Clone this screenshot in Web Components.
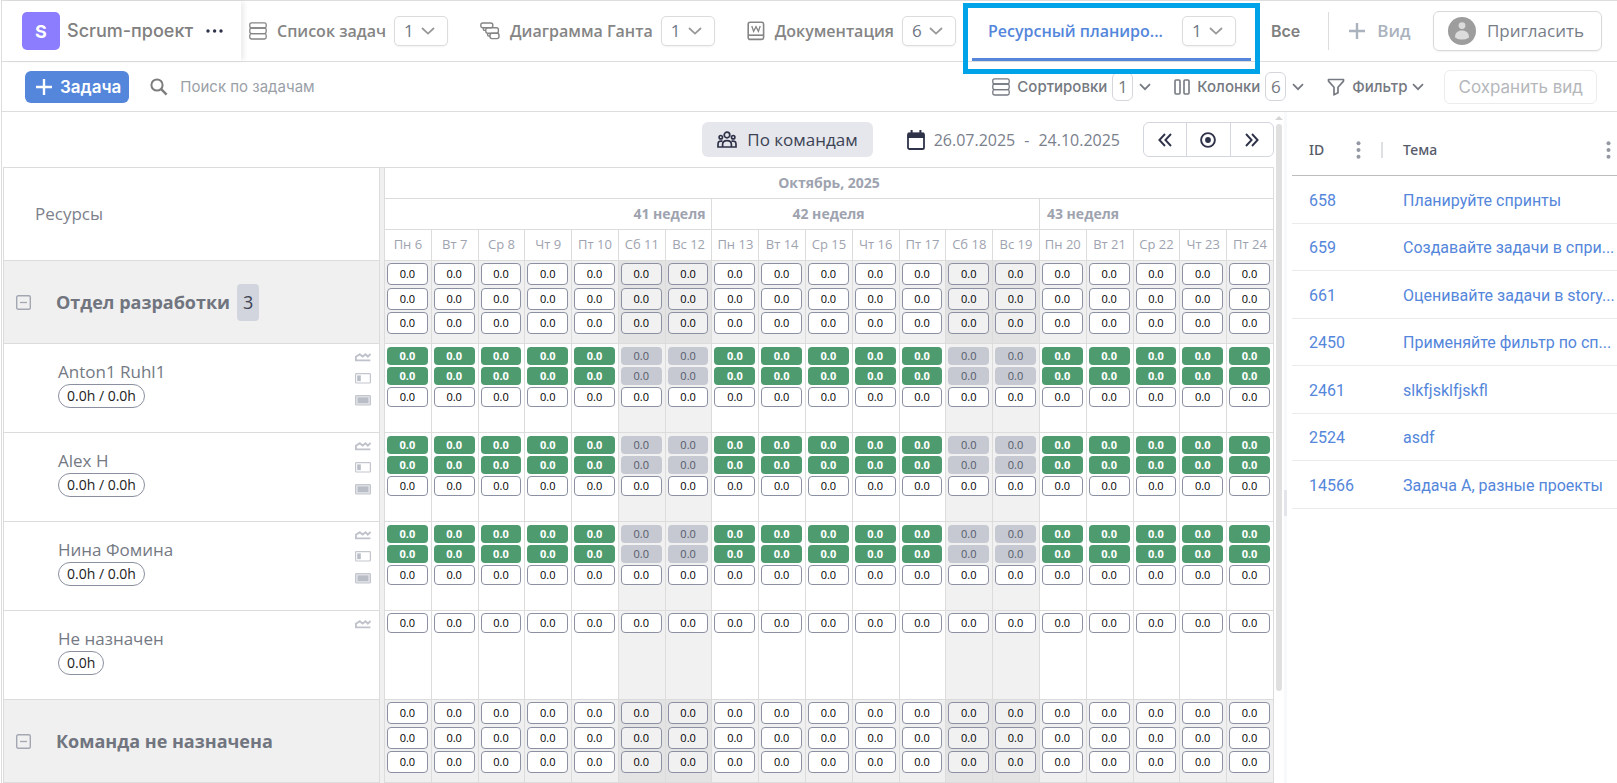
<!DOCTYPE html>
<html lang="ru">
<head>
<meta charset="utf-8">
<title>Scrum-проект</title>
<style>
html, body { height: 100%; margin: 0; }
body { background: #fff; overflow: hidden; font-family: "Open Sans", "Noto Sans", sans-serif; }
</style>
</head>
<body>
<planner-app></planner-app>
<script>
const BASE = `*, *::before, *::after { box-sizing: border-box; }
button { font: inherit; color: inherit; background: none; border: 0; padding: 0; margin: 0; cursor: pointer; }
a { color: inherit; text-decoration: none; }`;

const define = (name, html, setup) => customElements.define(name, class extends HTMLElement {
  connectedCallback() {
    if (this.shadowRoot) return;
    const t = document.createElement('template');
    t.innerHTML = typeof html === 'function' ? html(this) : html;
    this.attachShadow({ mode: 'open' }).append(t.content.cloneNode(true));
    if (setup) setup(this);
  }
});

/* [width, height, markup] */
const ICONS = {
  rows: [18, 18, '<g fill="none" stroke="currentColor" stroke-width="1.3"><rect x=".8" y=".8" width="16.4" height="5.2" rx="1.8"/><rect x=".8" y="6" width="16.4" height="5.6" rx="1.8"/><rect x=".8" y="11.6" width="16.4" height="5.4" rx="1.8"/></g>'],
  gantt: [20, 18, '<g fill="none" stroke="currentColor" stroke-width="1.4"><rect x=".8" y="1" width="12" height="4.8" rx="2"/><rect x="5.8" y="5.8" width="12.6" height="5.4" rx="2"/><rect x="10" y="11.2" width="9" height="5.4" rx="2"/><path d="M3.4 6v1.4q0 1 1 1h1.4M7.6 11.4v1.4q0 1.2 1.2 1.2H10"/></g>'],
  doc: [18, 20, '<g fill="none" stroke="currentColor" stroke-width="1.6"><rect x="1.2" y="1.2" width="15.4" height="17.2" rx="2"/><path d="M1.4 14.2h15" /><path d="M4.8 5l1.8 5.4L9 5.6l2.4 4.8L13.2 5" stroke-width="1.3"/></g>'],
  down: [14, 8, '<path d="M1 1l6 5.6L13 1" fill="none" stroke="currentColor" stroke-width="1.8"/>'],
  downs: [12, 8, '<path d="M1 1.2l5 5 5-5" fill="none" stroke="currentColor" stroke-width="1.7"/>'],
  dots: [18, 4, '<g fill="#2f3349"><circle cx="2" cy="2" r="1.7"/><circle cx="8.6" cy="2" r="1.7"/><circle cx="15" cy="2" r="1.7"/></g>'],
  vdots: [5, 18, '<g fill="#9498a3"><circle cx="2.5" cy="2.2" r="2"/><circle cx="2.5" cy="9" r="2"/><circle cx="2.5" cy="15.8" r="2"/></g>'],
  plus: [16, 16, '<path d="M8 0v16M0 8h16" stroke="currentColor" stroke-width="2.4"/>'],
  user: [28, 28, '<circle cx="14" cy="14" r="14" fill="#9d9d9d"/><circle cx="14" cy="8.6" r="3.4" fill="#dcdcdc"/><path d="M7 20.4c0-5 3-7 7-7s7 2 7 7q-3 2.2-7 2.2t-7-2.2z" fill="#dcdcdc"/>'],
  search: [18, 18, '<g fill="none" stroke="currentColor" stroke-width="2"><circle cx="7" cy="7" r="5.6"/><path d="M11.2 11.2l5.4 5.4" stroke-width="2.4"/></g>'],
  columns: [16, 16, '<g fill="none" stroke="currentColor" stroke-width="1.6"><rect x="1" y="1" width="5" height="14" rx="1"/><rect x="10" y="1" width="5" height="14" rx="1"/></g>'],
  filter: [18, 18, '<path d="M1.5 1.500h15v1.600L11 9.200v5.600l-4 2V9.200L1.500 3.100z" fill="none" stroke="currentColor" stroke-width="1.7" stroke-linejoin="round"/>'],
  team: [20, 18, '<g fill="none" stroke="#2f3349" stroke-width="1.7"><circle cx="10" cy="4" r="2.8"/><circle cx="3.8" cy="6.2" r="1.7"/><circle cx="16.2" cy="6.2" r="1.7"/><path d="M5.6 16v-2.6q0-3.8 4.400-3.8t4.400 3.8V16zM5.400 10.200q-4.400-.8-4.400 3V16h4.600M14.600 10.200q4.400-.8 4.400 3V16h-4.600"/></g>'],
  calendar: [18, 20, '<rect x="1" y="3.6" width="16" height="15.4" rx="1.6" fill="none" stroke="currentColor" stroke-width="1.8"/><path d="M.6 3.400q0-.8.8-.8h15.200q.8 0 .8.800V8H.6zM3.600 0h2v4h-2zM12.400 0h2v4h-2z" fill="currentColor"/>'],
  prev: [14, 14, '<path d="M7 1L1.400 7 7 13M13 1L7.400 7l5.600 6" fill="none" stroke="currentColor" stroke-width="1.9"/>'],
  next: [14, 14, '<path d="M1 1l5.600 6L1 13M7 1l5.600 6L7 13" fill="none" stroke="currentColor" stroke-width="1.9"/>'],
  target: [16, 16, '<circle cx="8" cy="8" r="6.9" fill="none" stroke="currentColor" stroke-width="1.9"/><circle cx="8" cy="8" r="2.9" fill="currentColor"/>'],
  minus: [15, 15, '<rect x=".7" y=".7" width="13.6" height="13.6" rx="1.5" fill="none" stroke="#a3a7b2" stroke-width="1.4"/><path d="M4 7.500h7" stroke="#a3a7b2" stroke-width="1.3"/>'],
  wave: [16, 10, '<path d="M.9 9V4.800L4.800 2.200l2.800 2.400L10.600 2.200l2.200 2.400 2.800-2.600M0 8.400h15.400" fill="none" stroke="#bfc2ca" stroke-width="1.9"/>'],
  half: [16, 11, '<rect x=".6" y=".6" width="14.8" height="9.4" rx=".8" fill="none" stroke="#c3c6cd" stroke-width="1.2"/><rect x="2.2" y="2.4" width="3.6" height="5.8" fill="#b9bdc6"/>'],
  full: [16, 11, '<rect x=".6" y=".6" width="14.8" height="9.4" rx=".8" fill="#e3e5e9" stroke="#c3c6cd" stroke-width="1.2"/><rect x="2.6" y="2.4" width="10.8" height="5.8" fill="#b9bdc6"/>']
};

define('ui-icon', el => {
  const [w, h, body] = ICONS[el.getAttribute('name')];
  return `<style>:host { display: block; flex: none; width: ${w}px; height: ${h}px; } svg { display: block; }</style>
  <svg width="${w}" height="${h}" viewBox="0 0 ${w} ${h}" aria-hidden="true">${body}</svg>`;
});

define('count-button', el => `<style>${BASE}
  :host { display: block; flex: none; }
  button { display: flex; align-items: center; justify-content: space-between; width: 54px; height: 30px; padding: 0 12px 0 9px;
    border: 1px solid #dcdcdc; border-radius: 5px; box-shadow: 0 1px 2px rgba(0,0,0,.05); color: #707786; font-size: 17px; line-height: 24px; background: #fff; }
  ui-icon { color: #999; }</style>
  <button type="button" aria-haspopup="menu"><slot></slot><ui-icon name="down"></ui-icon></button>`);

define('view-tab', el => `<style>${BASE}
  :host { display: flex; align-items: center; flex: none; height: 100%; position: relative; color: #858585; }
  :host([active]) { padding: 0 15px 0 16px; margin-left: -16px; color: #5486db; box-shadow: inset 0 -3px #5486db; }
  :host([active]) .name { min-width: 194px; }
  :host([active])::after { content: ""; position: absolute; inset: 2px -9px -13px -9px; border: 5px solid #00a2e8; pointer-events: none; z-index: 3; }
  ui-icon { margin-right: 10px; }
  .name { font-size: 16px; line-height: 24px; font-weight: 600; white-space: nowrap; margin-right: 8px; }
  :host([active]) .name { margin-right: 0; }</style>
  ${el.hasAttribute('icon') ? `<ui-icon name="${el.getAttribute('icon')}"></ui-icon>` : ''}
  <a class="name" href="#"><slot></slot></a><count-button>${el.getAttribute('count')}</count-button>`);

define('project-header', `<style>${BASE}
  :host { display: flex; align-items: center; height: 62px; border-top: 1px solid #ddd; border-bottom: 1px solid #ddd; }
  .project { display: flex; align-items: center; width: 239px; height: 100%; padding-left: 20px; flex: none; box-shadow: 4px 0 5px -1px rgba(0,0,0,.08);
    font-family: Inter, sans-serif; }
  .logo { display: grid; place-items: center; width: 38px; height: 38px; border-radius: 5px; background: #8c7dff; color: #fff; font-size: 18px; font-weight: 700; }
  .title { margin: 0 13px 0 7px; font-size: 18px; line-height: 24px; font-weight: 500; color: #808080; white-space: nowrap; }
  nav { display: flex; height: 100%; gap: 32px; padding-left: 8px; flex: none; }
  .all { margin-left: 20px; font: 600 16px/24px Inter, sans-serif; color: #808080; }
  .sep { width: 1px; height: 38px; background: #ddd; margin-left: 28px; }
  .add { display: flex; align-items: center; gap: 12px; margin-left: 20px; font-size: 17px; line-height: 24px; font-weight: 600; color: #a9b2bd; }
  .invite { display: flex; align-items: center; gap: 11px; height: 40px; margin: 0 15px 0 auto; padding: 0 17px 0 14px; border: 1px solid #d9d9d9; border-radius: 6px;
    color: #777d88; font-size: 17px; line-height: 24px; box-shadow: 0 1px 2px rgba(0,0,0,.06); }
  </style>
  <div class="project"><span class="logo">S</span><span class="title">Scrum-проект</span><button type="button" aria-label="Меню проекта"><ui-icon name="dots"></ui-icon></button></div>
  <nav>
    <view-tab icon="rows" count="1">Список задач</view-tab>
    <view-tab icon="gantt" count="1">Диаграмма Ганта</view-tab>
    <view-tab icon="doc" count="6">Документация</view-tab>
    <view-tab active count="1">Ресурсный планиро...</view-tab>
  </nav>
  <a class="all" href="#">Все</a><span class="sep"></span>
  <button class="add" type="button"><ui-icon name="plus"></ui-icon>Вид</button>
  <button class="invite" type="button"><ui-icon name="user"></ui-icon>Пригласить</button>`);

define('tool-menu', el => `<style>${BASE}
  :host { display: block; flex: none; }
  button { display: flex; align-items: center; font: 500 15px/20px Inter, sans-serif; color: #757981; white-space: nowrap; }
  .label { margin-left: 7px; margin-right: 5px; }
  .count { display: grid; place-items: center; width: 21px; height: 29px; margin-right: 6px; border: 1px solid #d4d6da; border-radius: 6px; font: 400 17px/24px "Open Sans", sans-serif; }</style>
  <button type="button" aria-haspopup="menu"><ui-icon name="${el.getAttribute('icon')}"></ui-icon><span class="label"><slot></slot></span>
  ${el.hasAttribute('count') ? `<span class="count">${el.getAttribute('count')}</span>` : ''}<ui-icon name="downs"></ui-icon></button>`);

define('view-toolbar', `<style>${BASE}
  :host { display: flex; align-items: center; height: 50px; padding: 0 20px 0 23px; border-bottom: 1px solid #ddd; font-family: Inter, sans-serif; }
  .new { display: flex; align-items: center; gap: 8px; height: 32px; padding: 0 8px 0 11px; border-radius: 6px; background: #5486db; color: #fff; font-size: 17px; line-height: 24px; font-weight: 600; }
  label { display: flex; align-items: center; gap: 12px; margin-left: 21px; flex: 1; color: #7d7d7d; }
  input { flex: 1; min-width: 0; border: 0; outline: 0; background: none; padding: 0; font: 400 15px/20px Inter, sans-serif; }
  input::placeholder { color: #9aa0a8; opacity: 1; }
  .menus { display: flex; align-items: center; gap: 23px; }
  .save { height: 34px; margin-left: 20px; padding: 0 13px; border: 1px solid #ececec; border-radius: 6px; color: #b5b7bb; font-size: 17px; line-height: 24px; }</style>
  <button class="new" type="button"><ui-icon name="plus"></ui-icon>Задача</button>
  <label aria-label="Поиск"><ui-icon name="search"></ui-icon><input type="search" placeholder="Поиск по задачам"></label>
  <div class="menus"><tool-menu icon="rows" count="1">Сортировки</tool-menu><tool-menu icon="columns" count="6">Колонки</tool-menu><tool-menu icon="filter">Фильтр</tool-menu></div>
  <button class="save" type="button" disabled>Сохранить вид</button>`);

define('planner-controls', `<style>${BASE}
  :host { display: flex; align-items: center; justify-content: flex-end; height: 55px; color: #2f3349; font-size: 17px; line-height: 24px; }
  .team { display: flex; align-items: center; gap: 10px; height: 35px; padding: 0 15px; border-radius: 6px; background: #e5e7ec; color: #3c4254; }
  .range { display: flex; align-items: center; gap: 9px; margin: 0 23px 0 34px; color: #2f3349; font-size: 16px; }
  .range span { color: #7a808c; }
  .steps { display: flex; width: 131px; height: 35px; border: 1px solid #d3d6df; border-radius: 6px; }
  .steps button { flex: 1; display: grid; place-items: center; }
  .steps button + button { border-left: 1px solid #d3d6df; }</style>
  <button class="team" type="button"><ui-icon name="team"></ui-icon>По командам</button>
  <button class="range" type="button"><ui-icon name="calendar"></ui-icon><span>26.07.2025</span><span>-</span><span>24.10.2025</span></button>
  <div class="steps"><button type="button" aria-label="Назад"><ui-icon name="prev"></ui-icon></button><button type="button" aria-label="Сегодня"><ui-icon name="target"></ui-icon></button><button type="button" aria-label="Вперёд"><ui-icon name="next"></ui-icon></button></div>`);

const ROWS = [
  { group: 'Отдел разработки', badge: '3' },
  { name: 'Anton1 Ruhl1', hours: '0.0h / 0.0h' },
  { name: 'Alex H', hours: '0.0h / 0.0h' },
  { name: 'Нина Фомина', hours: '0.0h / 0.0h' },
  { name: 'Не назначен', hours: '0.0h', free: true },
  { group: 'Команда не назначена' }
];

const TABLE = `table { width: 100%; border-collapse: separate; border-spacing: 0; table-layout: fixed; }
  th, td { padding: 0; border-bottom: 1px solid #dcdcdc; }
  tr.group td, tr.group th { height: 83px; background: #f0f0f0; }
  tr.user td, tr.user th { height: 89px; }`;

define('resource-list', () => `<style>${BASE}${TABLE}
  :host { display: block; width: 377px; flex: none; border: 1px solid #dcdcdc; border-bottom: 0; }
  th { text-align: left; font-weight: 400; }
  thead th { height: 93px; padding-left: 31px; color: #7c818c; font-size: 17px; line-height: 24px; }
  .line { display: flex; align-items: center; }
  .group .line { padding-left: 12px; }
  .group button { margin-right: 25px; }
  .group .name { font-size: 18px; line-height: 24px; font-weight: 700; color: #70757f; }
  .badge { display: grid; place-items: center; width: 22px; height: 37px; margin-left: 7px; border-radius: 4px; background: #d2d5dd; color: #3c4254; font-size: 18px; }
  .user .line { align-items: flex-start; justify-content: space-between; height: 88px; padding: 8px 8px 0 54px; }
  .who { display: flex; flex-direction: column; align-items: flex-start; padding-top: 8px; }
  .who .name { font-size: 17px; line-height: 24px; font-weight: 500; color: #747983; }
  .hours { height: 24px; padding: 0 8px; border: 1px solid #8a90a0; border-radius: 12px; font-size: 14px; line-height: 22px; color: #222; }
  .kinds { display: flex; flex-direction: column; gap: 11px; }</style>
  <table><thead><tr><th scope="col">Ресурсы</th></tr></thead><tbody>
  ${ROWS.map(r => r.group
    ? `<tr class="group"><th scope="row"><div class="line"><button type="button" aria-label="Свернуть"><ui-icon name="minus"></ui-icon></button><span class="name">${r.group}</span>${r.badge ? `<span class="badge">${r.badge}</span>` : ''}</div></th></tr>`
    : `<tr class="user"><th scope="row"><div class="line"><div class="who"><span class="name">${r.name}</span><span class="hours">${r.hours}</span></div><div class="kinds"><ui-icon name="wave"></ui-icon>${r.free ? '' : '<ui-icon name="half"></ui-icon><ui-icon name="full"></ui-icon>'}</div></div></th></tr>`).join('')}
  </tbody></table>`);

const NAMES = ['Пн', 'Вт', 'Ср', 'Чт', 'Пт', 'Сб', 'Вс'];
const DAYS = Array.from({ length: 19 }, (_, i) => ({ label: `${NAMES[i % 7]} ${i + 6}`, off: i % 7 > 4 }));

define('load-timeline', () => `<style>${BASE}${TABLE}
  :host { display: block; flex: 1; min-width: 0; border-top: 1px solid #dcdcdc; border-left: 1px solid #dcdcdc; }
  th, td { border-right: 1px solid #dcdcdc; }
  thead th { height: 31px; color: #9ea3af; font-size: 14px; line-height: 20px; font-weight: 700; white-space: nowrap; overflow: hidden; }
  thead .day { font-size: 13px; font-weight: 400; padding-bottom: 2px; }
  .w41 { text-align: right; padding-right: 6px; }
  .w42 { text-align: left; padding-left: 80px; }
  .w43 { text-align: left; padding-left: 7px; }
  td { vertical-align: top; }
  .cell { display: flex; flex-direction: column; gap: 2px; padding: 3px 3px 0 2px; }
  .group .cell, .free .cell { padding-top: 2px; }
  .cell span { height: 18px; border-radius: 4px; text-align: center; font-size: 11px; line-height: 18px; color: #fff; background: #4d9b6e; font-weight: 700; }
  .cell .box { height: 20px; border: 1px solid #8b91a2; background: #fff; color: #000; font-weight: 500; }
  .group .cell .box { height: 22px; line-height: 20px; }
  .group .cell .box:nth-child(2) { margin-top: 1px; }
  .off { background: #f1f1f1; }
  tr.group td.off { background: #e3e3e3; }
  .off .cell span { background: #c6c9d1; color: #555a6b; font-weight: 500; }
  .off .cell .box { background: #fff; color: #000; }
  .group .off .cell .box { background: #f1f1f1; }</style>
  <table><thead>
  <tr><th colspan="19">Октябрь, 2025</th></tr>
  <tr><th class="w41" colspan="7">41 неделя</th><th class="w42" colspan="7">42 неделя</th><th class="w43" colspan="5">43 неделя</th></tr>
  <tr>${DAYS.map(d => `<th class="day" scope="col">${d.label}</th>`).join('')}</tr></thead><tbody>
  ${ROWS.map(r => {
    const box = '<span class="box">0.0</span>';
    const cell = r.group ? box.repeat(3) : r.free ? box : '<span>0.0</span><span>0.0</span>' + box;
    return `<tr class="${r.group ? 'group' : r.free ? 'user free' : 'user'}">${DAYS.map(d => `<td${d.off ? ' class="off"' : ''}><div class="cell">${cell}</div></td>`).join('')}</tr>`;
  }).join('')}
  </tbody></table>`);

const TASKS = [['658', 'Планируйте спринты'], ['659', 'Создавайте задачи в спри...'], ['661', 'Оценивайте задачи в story...'], ['2450', 'Применяйте фильтр по сп...'],
  ['2461', 'slkfjsklfjskfl'], ['2524', 'asdf'], ['14566', 'Задача А, разные проекты']];

define('task-table', () => `<style>${BASE}
  :host { display: block; width: 325px; flex: none; padding-top: 14px; overflow: hidden; }
  table { width: 100%; border-collapse: separate; border-spacing: 0; table-layout: fixed; }
  th, td { padding: 0 0 0 17px; text-align: left; font-weight: 400; white-space: nowrap; border-bottom: 1px solid #ebebed; }
  th { height: 50px; padding-bottom: 2px; border-bottom-color: #bdbdbd; color: #565b6a; font: 500 14px/20px "Noto Sans", sans-serif; }
  td { height: 48px; padding-top: 2px; font: 400 16px/20px Roboto, sans-serif; color: #5486db; overflow: hidden; }
  tr:nth-child(even) td { height: 47px; }
  th:last-child, td:last-child { padding-left: 20px; }
  .head { display: flex; align-items: center; justify-content: space-between; }
  .id .head { border-right: 2px solid #dfe0e3; height: 16px; }
  .id ui-icon { margin-right: 20px; }
  .topic ui-icon { margin-right: 6px; }</style>
  <table><colgroup><col style="width:91px"><col></colgroup>
  <thead><tr><th class="id" scope="col"><div class="head">ID<ui-icon name="vdots"></ui-icon></div></th><th class="topic" scope="col"><div class="head">Тема<ui-icon name="vdots"></ui-icon></div></th></tr></thead>
  <tbody>${TASKS.map(([id, t]) => `<tr><td><a href="#">${id}</a></td><td><a href="#">${t}</a></td></tr>`).join('')}</tbody></table>`);

define('scroll-rail', `<style>
  :host { display: flex; flex-direction: column; align-items: center; width: 10px; flex: none; padding-top: 4px; }
  .up { border: 4px solid transparent; border-top: 0; border-bottom: 4px solid #d5d5d5; }
  .thumb { width: 6px; height: 85%; margin-top: 4px; border-radius: 3px; background: #e0e0e0; }</style>
  <span class="up"></span><span class="thumb"></span>`);

define('pane-splitter', `<style>
  :host { display: flex; align-items: center; width: 3px; margin-right: 5px; flex: none; background: #f8f9fa; padding-top: 110px; }
  i { width: 3px; height: 26px; background: #e3e5ea; }</style><i></i>`);

define('planner-app', `<style>${BASE}
  :host { display: flex; flex-direction: column; height: 100vh; margin-left: 1px; border-left: 1px solid #ddd; overflow: hidden; }
  main { display: flex; flex: 1; min-height: 0; overflow: hidden; }
  .planner { flex: 1; min-width: 0; padding-left: 1px; }
  .grid { display: flex; }
  .gap { width: 4px; flex: none; background: #f0f0f0; border-top: 1px solid #dcdcdc; }</style>
  <project-header></project-header>
  <view-toolbar></view-toolbar>
  <main>
    <section class="planner"><planner-controls></planner-controls>
      <div class="grid"><resource-list></resource-list><div class="gap"></div><load-timeline></load-timeline></div></section>
    <scroll-rail></scroll-rail><pane-splitter></pane-splitter><task-table></task-table>
  </main>`);
</script>
</body>
</html>
